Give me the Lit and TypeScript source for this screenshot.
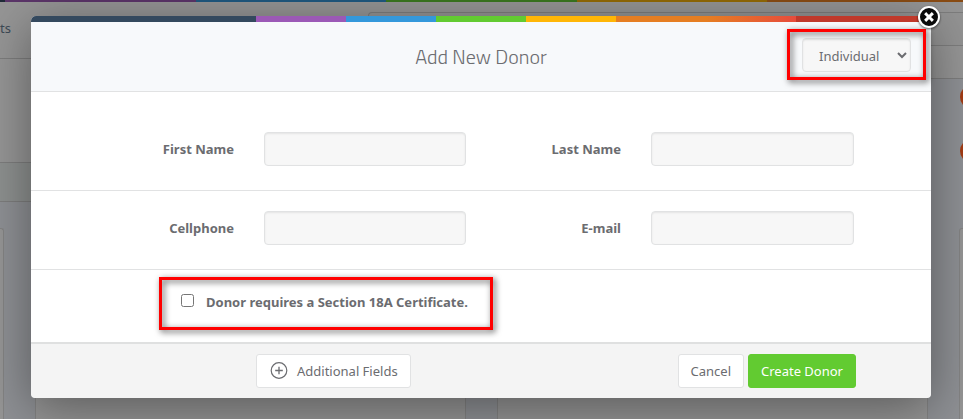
import { LitElement, html, css } from "lit";
import { customElement, state } from "lit/decorators.js";

@customElement("app-backdrop")
export class AppBackdrop extends LitElement {
  static styles = css`
    :host {
      display: flex;
      flex-direction: column;
      overflow: hidden;
      background: #8e9094;
      font-family: "Noto Sans", "Open Sans", sans-serif;
      font-size: 13px;
    }
    .stripe {
      flex: none;
      height: 2px;
      background: linear-gradient(
          90deg,
          #1f2b38 25%,
          #5b3569 25% 35%,
          #1f5980 35% 45%,
          #3a771f 45% 55%,
          #936a06 55% 65%,
          #8a4c14 65% 75%,
          #8a2e24 85%
        )
        center / 1906px 100%;
    }
    .top {
      display: grid;
      grid-template-columns: 368fr 595fr;
      height: 200px;
    }
    .bar,
    .band,
    .subband {
      box-sizing: border-box;
      border-bottom: 1px solid #7d7d7d;
      background: #959595;
    }
    .bar {
      height: 57px;
      padding-top: 16px;
    }
    .bar a {
      line-height: 20px;
      color: #3c4a55;
      text-decoration: none;
    }
    .band {
      height: 104px;
    }
    .subband {
      height: 39px;
      background: #8d908f;
    }
    .tools {
      height: 77px;
      box-sizing: border-box;
      padding-top: 10px;
      background: #959595;
      border-bottom: 1px solid #7d7d7d;
    }
    .search {
      height: 32px;
      border: 1px solid #7d7d7d;
      border-right: 0;
      border-radius: 4px 0 0 0;
      background: #939393;
    }
    .dots {
      display: flex;
      flex-direction: column;
      align-items: flex-end;
      gap: 30px;
      padding-top: 6px;
      margin-right: -21px;
    }
    .dot {
      width: 24px;
      height: 24px;
      border-radius: 50%;
      background: #a33c14;
    }
    .cards {
      flex: 1;
      display: grid;
      grid-template-columns: repeat(4, 431px);
      justify-content: center;
      gap: 31px;
      padding-top: 26px;
    }
    .card {
      box-sizing: border-box;
      border: 1px solid #838383;
      border-bottom: 0;
      border-radius: 3px 3px 0 0;
      background: #959595;
    }
  `;

  render() {
    return html`
      <div class="stripe"></div>
      <div class="top">
        <div>
          <div class="bar"><a href="#reports">ts</a></div>
          <div class="band"></div>
          <div class="subband"></div>
        </div>
        <div>
          <div class="tools"><div class="search"></div></div>
          <div class="dots">
            <div class="dot"></div>
            <div class="dot"></div>
          </div>
        </div>
      </div>
      <div class="cards">
        <div class="card"></div>
        <div class="card"></div>
        <div class="card"></div>
        <div class="card"></div>
      </div>
    `;
  }
}

@customElement("app-root")
export class AppRoot extends LitElement {
  @state() private kind = "Individual";

  static styles = css`
    :host {
      display: grid;
      min-height: 100vh;
      overflow: hidden;
      font-family: "Noto Sans", "Open Sans", sans-serif;
      font-size: 13px;
      line-height: 20px;
      color: #6b6c70;
    }
    app-backdrop,
    .modal {
      grid-area: 1 / 1;
      min-width: 0;
    }
    .modal {
      position: relative;
      align-self: start;
      margin: 16px 32px 21px 31px;
      border-radius: 5px;
      background: #fff;
      box-shadow: 0 10px 50px rgba(0, 0, 0, 0.4);
    }
    .stripe {
      height: 6px;
      border-radius: 5px 5px 0 0;
      background: linear-gradient(
        90deg,
        #34495e 25%,
        #9b59b6 25% 35%,
        #3498db 35% 45%,
        #62cb31 45% 55%,
        #ffb606 55% 65%,
        #e67e22 65% 75%,
        #e74c3c 85%,
        #c0392b 85%
      );
    }
    .head {
      box-sizing: border-box;
      height: 70px;
      display: grid;
      grid-template-columns: 1fr auto 1fr;
      border-bottom: 1px solid #e1e2e3;
      background: #f7f9fb;
    }
    h1 {
      grid-column: 2;
      align-self: center;
      margin: 0;
      font-family: "Titillium Web", Roboto, sans-serif;
      font-size: 20px;
      font-weight: 300;
      line-height: 24px;
    }
    .mark {
      box-sizing: border-box;
      position: relative;
    }
    .mark::after {
      content: "";
      position: absolute;
      inset: 0;
      border: 3px solid #f00;
      filter: drop-shadow(2px 2px 3px rgba(0, 0, 0, 0.7));
      pointer-events: none;
    }
    .kind {
      justify-self: end;
      align-self: start;
      margin: 7px 5px 0 0;
      padding: 9px 15px 8px;
    }
    input[type="text"],
    select {
      box-sizing: border-box;
      display: block;
      width: 100%;
      height: 34px;
      margin: 0;
      border: 1px solid #e1e2e3;
      border-radius: 4px;
      background: #f7f7f7;
      box-shadow: inset 0 1px 2px rgba(0, 0, 0, 0.08);
      font: inherit;
      color: inherit;
    }
    input[type="text"] {
      padding: 6px 12px;
    }
    select {
      width: 109px;
      padding: 2px 0 0 12px;
    }
    .row {
      display: grid;
      grid-template-columns: 203fr 202fr 125fr 203fr;
      align-items: center;
      column-gap: 30px;
      padding: 20px 77px 24px 0;
      border-bottom: 1px solid #e1e2e3;
    }
    .row.first {
      padding-top: 40px;
    }
    label {
      font-weight: 700;
    }
    .row label {
      text-align: right;
    }
    .certificate {
      display: flex;
      padding: 7px 128px 12px;
    }
    .certificate .mark {
      display: flex;
      align-items: center;
      gap: 12px;
      height: 53px;
      padding: 0 25px 3px 22px;
    }
    input[type="checkbox"] {
      width: 13px;
      height: 13px;
      margin: 0 0 4px;
    }
    .foot {
      display: flex;
      gap: 4px;
      padding: 10px 75px 10px 25%;
      border-top: 2px solid #dfe0e0;
      border-radius: 0 0 4px 4px;
      background: #f4f4f4;
    }
    .foot button {
      box-sizing: border-box;
      height: 34px;
      display: flex;
      align-items: center;
      gap: 8px;
      padding: 0 12px;
      border: 1px solid #e1e2e3;
      border-radius: 3px;
      background: #fff;
      font: inherit;
      color: inherit;
    }
    .foot .more {
      margin-right: auto;
    }
    .foot .create {
      border-color: #62cb31;
      background: #62cb31;
      color: #fff;
    }
    .close {
      position: absolute;
      top: -12px;
      right: -11px;
      padding: 0;
      border: 0;
      background: none;
      line-height: 0;
      filter: drop-shadow(0 1px 1px rgba(0, 0, 0, 0.6));
    }
  `;

  private onKind(e: Event) {
    this.kind = (e.target as HTMLSelectElement).value;
  }

  private field(id: string, text: string) {
    return html`<label for=${id}>${text}</label><input id=${id} type="text" />`;
  }

  render() {
    return html`
      <app-backdrop></app-backdrop>
      <form class="modal" role="dialog" aria-labelledby="title">
        <div class="stripe"></div>
        <div class="head">
          <h1 id="title">Add New Donor</h1>
          <div class="mark kind">
            <select aria-label="Donor type" .value=${this.kind} @change=${this.onKind}>
              <option>Individual</option>
              <option>Organisation</option>
            </select>
          </div>
        </div>
        <div class="row first">
          ${this.field("first", "First Name")} ${this.field("last", "Last Name")}
        </div>
        <div class="row">
          ${this.field("cell", "Cellphone")} ${this.field("email", "E-mail")}
        </div>
        <div class="certificate">
          <div class="mark">
            <input id="cert" type="checkbox" />
            <label for="cert">Donor requires a Section 18A Certificate.</label>
          </div>
        </div>
        <div class="foot">
          <button type="button" class="more">
            <svg width="20" height="20" viewBox="0 0 20 20" fill="none" stroke="#6b6c70" aria-hidden="true">
              <circle cx="10" cy="9.5" r="7.8" stroke-width="1.2" />
              <path d="M10 5.7v7.6M6.2 9.5h7.6" stroke-width="1.3" />
            </svg>
            Additional Fields
          </button>
          <button type="button">Cancel</button>
          <button type="button" class="create">Create Donor</button>
        </div>
        <button type="button" class="close" aria-label="Close">
          <svg width="26" height="26" viewBox="0 0 26 26" aria-hidden="true">
            <circle cx="13" cy="13" r="10" fill="#0a0a0a" stroke="#fff" stroke-width="2" />
            <path d="M10.2 10.2l5.6 5.6M15.8 10.2l-5.6 5.6" stroke="#fff" stroke-width="3" stroke-linecap="square" />
          </svg>
        </button>
      </form>
    `;
  }
}
